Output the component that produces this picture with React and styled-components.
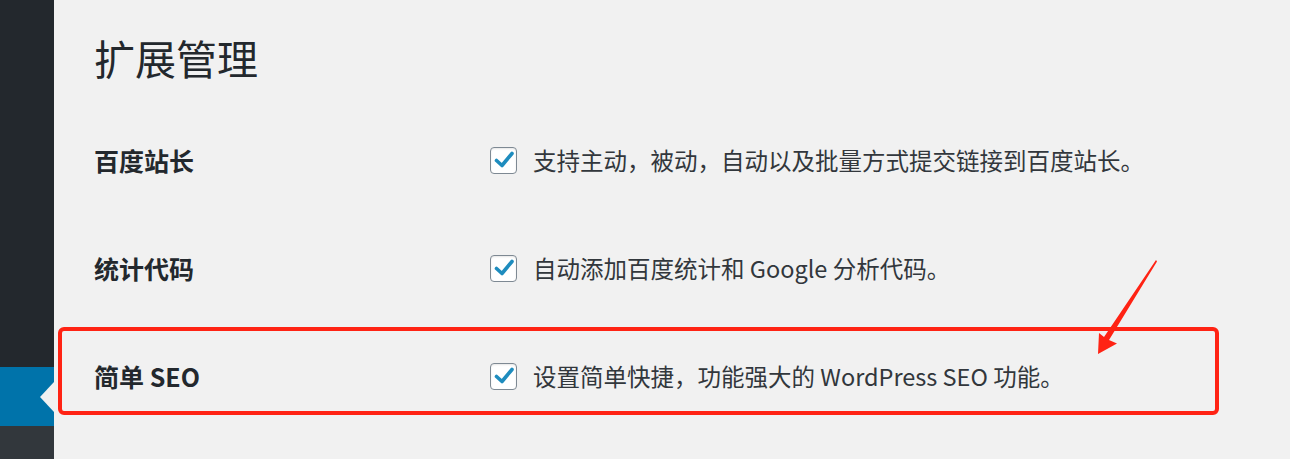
import React from 'react'
import styled, { createGlobalStyle } from 'styled-components'

const GlobalStyle = createGlobalStyle`
    html, body {
        margin: 0;
        padding: 0;
        background: #f1f1f1;
        overflow: hidden;
    }
    body {
        font-family: "Noto Sans CJK SC", "Noto Sans", sans-serif;
    }
`

const modules = [
    { id: 'baidu', label: '百度站长', desc: '支持主动，被动，自动以及批量方式提交链接到百度站长。' },
    { id: 'stats', label: '统计代码', desc: '自动添加百度统计和 Google 分析代码。' },
    { id: 'seo', label: '简单 SEO', desc: '设置简单快捷，功能强大的 WordPress SEO 功能。', highlighted: true },
]

function Checkbox() {
    return (
        <CheckBox>
            <svg width="22" height="22" viewBox="0 0 22 22">
                <path d="M3.5 11.5 L9 16.5 L19 4.5" fill="none" stroke="#1e8cbe" strokeWidth="3.6" strokeLinecap="round" strokeLinejoin="round" />
            </svg>
        </CheckBox>
    )
}

function App() {
    return (
        <>
            <GlobalStyle />
            <Page>
                <Sidebar>
                    <MenuFill />
                    <MenuCurrent />
                    <MenuBelow />
                </Sidebar>
                <Main>
                    <Title>扩展管理</Title>
                    <FormTable>
                        {modules.map((m) => (
                            <Row key={m.id} $highlighted={m.highlighted}>
                                <Label>{m.label}</Label>
                                <Field>
                                    <Checkbox />
                                    <Desc>{m.desc}</Desc>
                                </Field>
                            </Row>
                        ))}
                    </FormTable>
                </Main>
                <Arrow width="70" height="100" viewBox="1092 258 70 100">
                    <polygon
                        points="1156,260 1157,261.5 1109,340 1117,343.5 1098,354 1099,333 1104,337"
                        fill="#ff2314"
                    />
                </Arrow>
            </Page>
        </>
    )
}

const Page = styled.div`
    position: relative;
    display: flex;
    width: 1290px;
    height: 459px;
    background: #f1f1f1;
`

const Sidebar = styled.div`
    display: flex;
    flex-direction: column;
    width: 54px;
    flex-shrink: 0;
    background: #23282d;
`

const MenuFill = styled.div`
    flex: 1;
`

const MenuCurrent = styled.div`
    position: relative;
    height: 59px;
    background: #0073aa;

    &::after {
        content: '';
        position: absolute;
        right: 0;
        top: 15px;
        border-style: solid;
        border-width: 15px 14px 15px 0;
        border-color: transparent #f1f1f1 transparent transparent;
    }
`

const MenuBelow = styled.div`
    height: 33px;
    background: #32373c;
`

const Main = styled.div`
    flex: 1;
    padding-left: 40px;
`

const Title = styled.h1`
    margin: 27px 0 19px;
    font-size: 41px;
    line-height: 60px;
    font-weight: 400;
    color: #23282d;
`

const FormTable = styled.div`
    display: flex;
    flex-direction: column;
`

const Row = styled.div`
    position: relative;
    display: grid;
    grid-template-columns: 396px 1fr;
    align-items: center;
    height: 108px;

    ${({ $highlighted }) => $highlighted && `
        &::after {
            content: '';
            position: absolute;
            left: -36px;
            right: 71px;
            top: 5px;
            bottom: 15px;
            border: 4.5px solid #ff2314;
            border-radius: 6px;
        }
    `}
`

const Label = styled.div`
    font-size: 25px;
    font-weight: 700;
    color: #23282d;
`

const Field = styled.div`
    display: flex;
    align-items: center;
    gap: 16px;
`

const CheckBox = styled.span`
    display: inline-flex;
    align-items: center;
    justify-content: center;
    width: 25px;
    height: 25px;
    border: 1px solid #7e8993;
    border-radius: 4px;
    background: #fff;
    box-shadow: inset 0 1px 2px rgba(0, 0, 0, 0.1);
`

const Desc = styled.span`
    font-size: 23.5px;
    color: #32373c;
`

const Arrow = styled.svg`
    position: absolute;
    left: 1092px;
    top: 258px;
`

export default App
